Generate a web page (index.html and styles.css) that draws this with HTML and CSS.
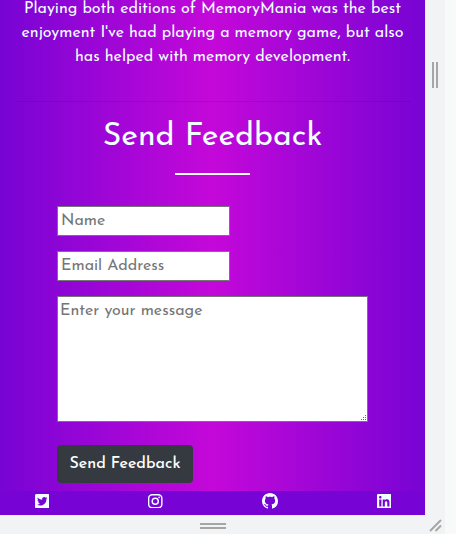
FILE: index.html
```html
<!DOCTYPE html>
<html lang="en">
<head>
<meta charset="utf-8">
<title>MemoryMania</title>
<link rel="stylesheet" href="styles.css">
</head>
<body>
<div class="device">
  <div class="viewport">
    <main class="page">
      <p class="quote">Playing both editions of MemoryMania was the best enjoyment I've had playing a memory game, but also has helped with memory development.</p>
      <hr class="divider">
      <h2 class="title">Send Feedback</h2>
      <div class="underline"></div>
      <form class="form">
        <input class="field line-input" type="text" placeholder="Name">
        <input class="field line-input" type="email" placeholder="Email Address">
        <div class="message-box">
          <textarea class="field message" placeholder="Enter your message"></textarea>
          <svg class="resizer" viewBox="0 0 5 5"><path d="M4 0h1v1h-1zM2 2h1v1h-1zM4 2h1v1h-1zM0 4h1v1h-1zM2 4h1v1h-1zM4 4h1v1h-1z"/></svg>
        </div>
        <button class="send" type="button">Send Feedback</button>
      </form>
    </main>
    <footer class="footer">
      <svg class="icon" viewBox="0 32 448 448"><path d="M400 32H48C21.5 32 0 53.5 0 80v352c0 26.5 21.5 48 48 48h352c26.5 0 48-21.5 48-48V80c0-26.5-21.5-48-48-48zm-48.9 158.8c.2 2.8.2 5.7.2 8.5 0 86.7-66 186.6-186.6 186.6-37.2 0-71.7-10.8-100.7-29.4 5.3.6 10.4.8 15.8.8 30.7 0 58.9-10.4 81.4-28-28.8-.6-53-19.5-61.3-45.5 10.1 1.5 19.2 1.5 29.6-1.2-30-6.1-52.5-32.5-52.5-64.4v-.8c8.7 4.9 18.9 7.9 29.6 8.3a65.447 65.447 0 0 1-29.2-54.6c0-12.2 3.2-23.4 8.9-33.1 32.3 39.8 80.8 65.8 135.2 68.6-9.3-44.5 24-80.6 64-80.6 18.9 0 35.9 7.9 47.9 20.7 14.8-2.8 29-8.3 41.6-15.8-4.9 15.2-15.2 28-28.8 36.1 13.2-1.4 26-5.1 37.8-10.2-8.9 13.1-20.1 24.7-32.9 34z"/></svg>
      <svg class="icon" viewBox="0 0 14 14"><rect class="ring" x=".65" y=".65" width="12.7" height="12.7" rx="3.4"/><circle class="ring" cx="7" cy="7" r="2.95"/><circle cx="10.75" cy="3.25" r=".85"/></svg>
      <svg class="icon github" viewBox="0 0 16 16"><path d="M8 0C3.58 0 0 3.58 0 8c0 3.54 2.29 6.53 5.47 7.59.4.07.55-.17.55-.38 0-.19-.01-.82-.01-1.49-2.01.37-2.53-.49-2.69-.94-.09-.23-.48-.94-.82-1.13-.28-.15-.68-.52-.01-.53.63-.01 1.08.58 1.23.82.72 1.21 1.87.87 2.33.66.07-.52.28-.87.51-1.07-1.78-.2-3.64-.89-3.64-3.95 0-.87.31-1.59.82-2.15-.08-.2-.36-1.02.08-2.12 0 0 .67-.21 2.2.82.64-.18 1.32-.27 2-.27s1.36.09 2 .27c1.53-1.04 2.2-.82 2.2-.82.44 1.1.16 1.92.08 2.12.51.56.82 1.27.82 2.15 0 3.07-1.87 3.75-3.65 3.95.29.25.54.73.54 1.48 0 1.07-.01 1.93-.01 2.2 0 .21.15.46.55.38A8.01 8.01 0 0 0 16 8c0-4.42-3.58-8-8-8z"/></svg>
      <svg class="icon" viewBox="0 32 448 448"><path d="M416 32H31.9C14.3 32 0 46.5 0 64.3v383.4C0 465.5 14.3 480 31.9 480H416c17.6 0 32-14.5 32-32.3V64.3c0-17.8-14.4-32.3-32-32.3zM135.4 416H69V202.2h66.5V416zm-33.2-243c-21.3 0-38.5-17.3-38.5-38.5S80.9 96 102.2 96c21.2 0 38.5 17.3 38.5 38.5 0 21.3-17.2 38.5-38.5 38.5zm282.1 243h-66.4V312c0-24.8-.5-56.7-34.5-56.7-34.6 0-39.9 27-39.9 54.9V416h-66.4V202.2h63.7v29.2h.9c8.9-16.8 30.6-34.5 62.9-34.5 67.2 0 79.7 44.3 79.7 101.9V416z"/></svg>
    </footer>
  </div>
  <div class="rail-right"><div class="grip-v"></div></div>
  <div class="rail-bottom"><div class="grip-h"></div></div>
  <div class="corner"><svg class="corner-grip" viewBox="0 0 14 14"><path d="M1 12L12 1M6.5 12L12 6.5"/></svg></div>
</div>
</body>
</html>
```
FILE: styles.css
```css
* { box-sizing: border-box; }
body {
  margin: 0;
  height: 534px;
  overflow: hidden;
  background: #f8faf9;
  font-family: "Josefin Sans", Lato, sans-serif;
  font-size: 16px;
  line-height: 24px;
}
.device {
  display: grid;
  grid-template-columns: 425px 20px;
  grid-template-rows: 515px 19px;
  width: 445px;
  background: #f1f3f4;
}
.viewport {
  display: flex;
  flex-direction: column;
  overflow: hidden;
  color: azure;
  background: linear-gradient(to right, #7704d4, #c408d9 50%, #7704d4);
}
.page { height: 491px; padding: 0 15px; }
.quote { margin: -3px 0 0; text-align: center; height: 104px; }
.divider { margin: 0; border: 0; border-top: 1px solid rgba(0, 0, 0, .1); }
.title {
  margin: 16px 0 0;
  height: 55px;
  font-size: 32px;
  font-weight: 400;
  line-height: 38px;
  text-align: center;
}
.underline { width: 75px; height: 2px; margin: 0 auto; background: #fff; }
.form { display: flex; flex-direction: column; align-items: flex-start; padding: 31px 42px 0; }
.field {
  display: block;
  margin: 0;
  border: 1px solid #767676;
  background: #fff;
  font: inherit;
}
.field::placeholder { color: #757575; }
.line-input { width: 173px; height: 30px; margin-bottom: 15px; padding: 1px 3px; }
.message-box { position: relative; }
.message { width: 311px; height: 126px; padding: 2px; resize: none; }
.resizer { position: absolute; right: 2px; bottom: 2px; width: 5px; height: 5px; fill: #666; }
.send {
  width: 136px;
  height: 38px;
  margin-top: 23px;
  padding: 0;
  border: 0;
  border-radius: 4px;
  background: #343a40;
  color: #fff;
  font: inherit;
  font-weight: 500;
}
.footer {
  display: flex;
  align-items: center;
  justify-content: space-between;
  height: 24px;
  padding: 0 34px 4px 34.5px;
  background: #7704d4;
}
.icon { display: block; width: 14.5px; height: 14.5px; fill: azure; }
.github { width: 16px; height: 16px; }
.ring { fill: none; stroke: azure; stroke-width: 1.4; }
.rail-right, .rail-bottom { display: flex; justify-content: center; }
.rail-right { padding-top: 62px; }
.grip-v { width: 6px; height: 26px; border: solid #a6a6a6; border-width: 0 2px; }
.rail-bottom { padding-top: 8px; }
.grip-h { width: 26px; height: 6px; border: solid #a6a6a6; border-width: 2px 0; }
.corner { padding: 4px 0 0 4px; }
.corner-grip { display: block; width: 14px; height: 14px; fill: none; stroke: #a6a6a6; stroke-width: 2; }
```
